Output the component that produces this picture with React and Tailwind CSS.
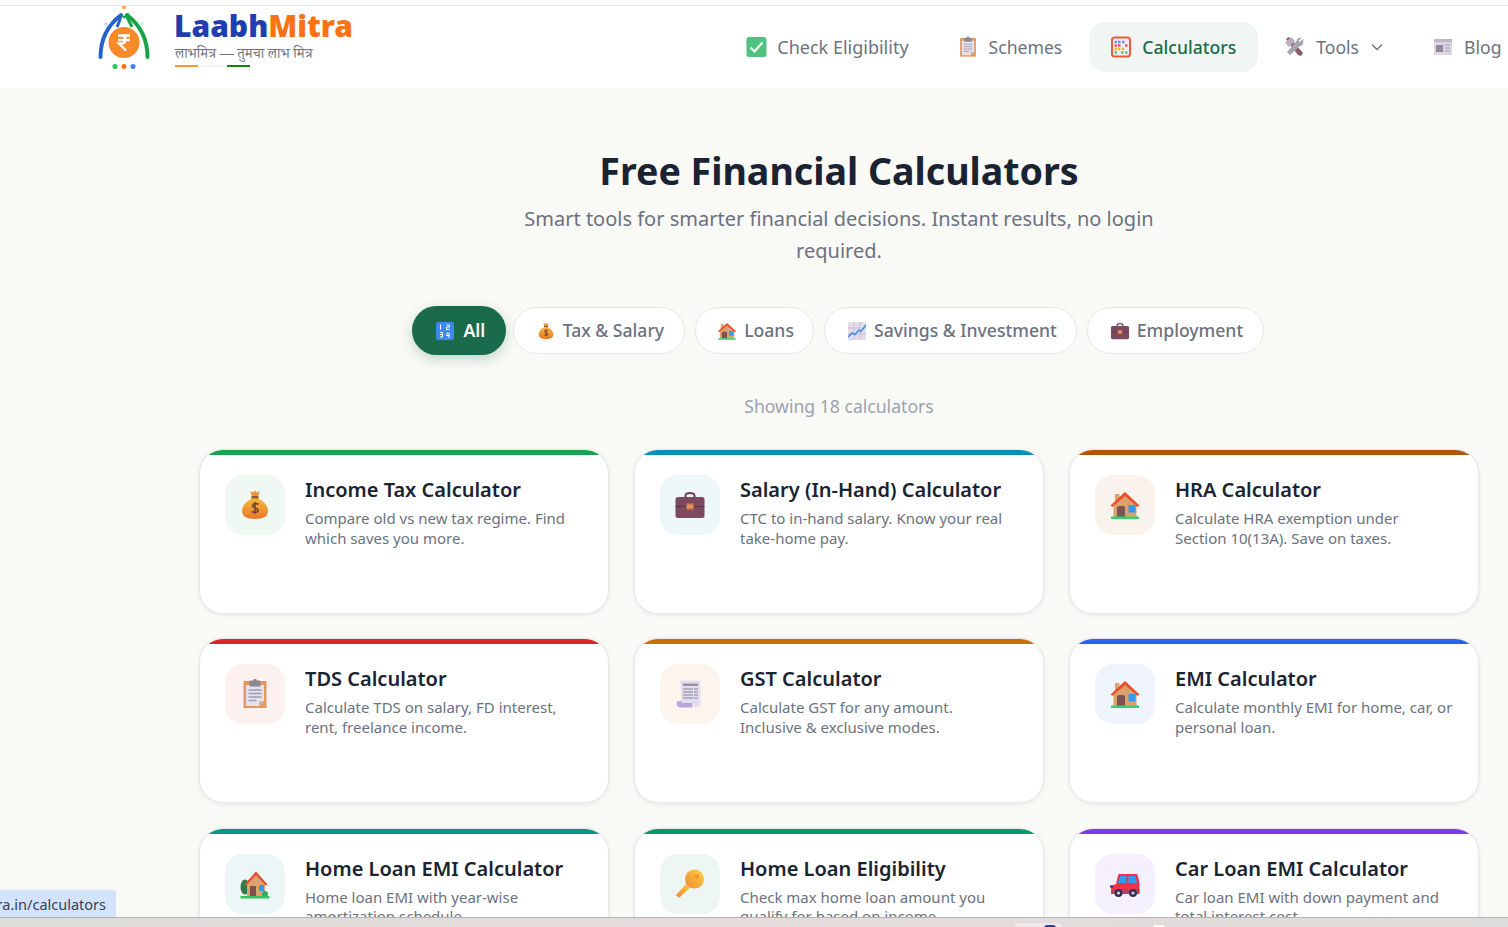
const font = { fontFamily: '"Noto Sans", "Noto Sans CJK SC", sans-serif' };

function MoneyBag({ size = 32 }) {
  return (
    <svg width={size} height={size} viewBox="0 0 32 32" aria-hidden="true">
      <defs>
        <linearGradient id="bagFill" x1="0" y1="0" x2="0" y2="1">
          <stop offset="0" stopColor="#f9b73e" />
          <stop offset="1" stopColor="#e8782a" />
        </linearGradient>
      </defs>
      <path d="M11 2l3 1.500 2-2 2 2 3-1.500-2 5.500h-6z" fill="#e9963a" />
      <rect x="12.500" y="7" width="7" height="3" fill="#8a5a35" />
      <path d="M13 9.500C7 12 3 17 3 22c0 5 4 8 13 8s13-3 13-8c0-5-4-10-10-12.500z" fill="url(#bagFill)" />
      <path d="M19.500 15.500c-1-1-5.500-1.500-5.800 1.200-.3 3 5.500 1.800 5.300 4.800-.2 2.600-5 2.300-6.300.8M16 13v12" fill="none" stroke="#7a4a35" strokeWidth="1.800" />
    </svg>
  );
}

function Briefcase({ size = 32 }) {
  return (
    <svg width={size} height={size} viewBox="0 0 32 32" aria-hidden="true">
      <path d="M11.500 9V6.500C11.500 4.800 13 4 16 4s4.500.8 4.500 2.500V9" fill="none" stroke="#6d3d4d" strokeWidth="2" />
      <rect x="1.500" y="8" width="29" height="21" rx="2.500" fill="#7c4a5e" />
      <path d="M1.500 17.500h29" stroke="#5b3044" strokeWidth="1" />
      <rect x="12.500" y="14.500" width="7" height="6" fill="#dc7f4e" />
      <rect x="12.500" y="17" width="7" height="1" fill="#f0a070" />
    </svg>
  );
}

function House({ size = 32 }) {
  return (
    <svg width={size} height={size} viewBox="0 0 32 32" aria-hidden="true">
      <rect x="6" y="5" width="4.500" height="12" fill="#d9a473" />
      <path d="M4.500 14L16 4l11.500 10v14h-23z" fill="#dda06c" />
      <path d="M1.500 16.500L16 3l14.500 13.500-1.800 1.500L16 7 3.300 18z" fill="#ea4e2c" />
      <path d="M8 28V18.500c0-1 1-1.500 4-1.500s4 .5 4 1.500V28z" fill="#7d5252" />
      <rect x="19.500" y="16" width="7" height="7.500" fill="#2f9cf0" />
      <rect x="2" y="27.500" width="28" height="2.500" fill="#34d06a" />
    </svg>
  );
}

function GardenHouse({ size = 32 }) {
  return (
    <svg width={size} height={size} viewBox="0 0 32 32" aria-hidden="true">
      <ellipse cx="6" cy="19" rx="4.500" ry="7.500" fill="#2f7d46" />
      <path d="M8 15L17 5l9 10v14H8z" fill="#dfa070" />
      <path d="M5.500 16.500L17 3.500l11.500 13-1.500 1.300L17 7 7 17.800z" fill="#e6492d" />
      <rect x="11" y="18" width="6" height="10" fill="#7d5252" />
      <rect x="20" y="17" width="5" height="6" fill="#2f9cf0" />
      <circle cx="26" cy="26" r="3" fill="#3aa85a" />
      <rect x="1.500" y="28" width="29" height="2.500" fill="#33c565" />
    </svg>
  );
}

function Clipboard({ size = 32 }) {
  return (
    <svg width={size} height={size} viewBox="0 0 32 32" aria-hidden="true">
      <rect x="4.500" y="3" width="23" height="27" fill="#e2995f" />
      <path d="M7 7h18v16l-5 5H7z" fill="#e6e1ee" />
      <path d="M25 23h-5v5z" fill="#c9b89f" />
      <rect x="10.500" y="2.500" width="11" height="6" rx="1" fill="#8d8794" />
      <circle cx="16" cy="2.500" r="1.800" fill="#8d8794" />
      <path d="M9.500 12h13M9.500 15.500h13M9.500 19h13M9.500 22.500h8" stroke="#a19cab" strokeWidth="1.300" />
    </svg>
  );
}

function Receipt({ size = 32 }) {
  return (
    <svg width={size} height={size} viewBox="0 0 32 32" aria-hidden="true">
      <path d="M2.500 25c0-1.500 1.500-2 3-2h13v6.500H7c-2.500 0-4.500-1.500-4.500-4.500z" fill="#b7a6dc" />
      <path d="M6.500 2l2 1.200L10.500 2l2 1.200 2-1.200 2 1.200 2-1.200 2 1.200 2-1.200 2 1.200 2-1.200v24c0 2.500-1.500 3.500-3.500 3.500s-3.500-1-3.500-3.500V25h-12z" fill="#e3deef" />
      <rect x="9" y="5.500" width="15" height="2.500" fill="#9791a3" />
      <path d="M9 11h15M9 14h15M9 17h15M9 20h15" stroke="#a8a3b3" strokeWidth="1.300" strokeDasharray="10 1 4 0" />
    </svg>
  );
}

function GoldKey({ size = 32 }) {
  return (
    <svg width={size} height={size} viewBox="0 0 32 32" aria-hidden="true">
      <defs>
        <linearGradient id="keyFill" x1="0" y1="1" x2="1" y2="0">
          <stop offset="0" stopColor="#f0883a" />
          <stop offset="1" stopColor="#fcd23e" />
        </linearGradient>
      </defs>
      <path d="M5 30l-3-3 12.500-13.500 4 4z" fill="url(#keyFill)" />
      <circle cx="20.500" cy="11" r="9.500" fill="url(#keyFill)" />
      <circle cx="23" cy="8.500" r="2.200" fill="#e9962f" />
    </svg>
  );
}

function RedCar({ size = 32 }) {
  return (
    <svg width={size} height={size} viewBox="0 0 32 32" aria-hidden="true">
      <path d="M9 7.500c0-.8.700-1.500 1.500-1.500H27c1 0 1.500.6 1.800 1.500L30.500 15v10H2v-7l5-2z" fill="#f0324a" />
      <path d="M11 8h6.500v7h-8.800zM19.500 8h7l1.500 7h-8.500z" fill="#2f9cf0" />
      <path d="M2 21h28.500v5H2z" fill="#b3445e" />
      <rect x="1" y="17.500" width="3" height="2" fill="#3b2a4a" />
      <circle cx="9.500" cy="25" r="4" fill="#3d2c4e" />
      <circle cx="9.500" cy="25" r="1.600" fill="#d8d3e3" />
      <circle cx="24" cy="25" r="4" fill="#3d2c4e" />
      <circle cx="24" cy="25" r="1.600" fill="#d8d3e3" />
    </svg>
  );
}

function CheckBox({ size = 22 }) {
  return (
    <svg width={size} height={size} viewBox="0 0 22 22" aria-hidden="true">
      <rect x="1.500" y="1" width="20" height="20" rx="2.500" fill="#4fc27f" />
      <path d="M5.500 11.500l4 4 8-9" fill="none" stroke="#fff" strokeWidth="2.200" />
    </svg>
  );
}

function Abacus({ size = 22 }) {
  return (
    <svg width={size} height={size} viewBox="0 0 22 22" aria-hidden="true">
      <rect x="2" y="1.500" width="18" height="19" rx="2.500" fill="#f4eff3" stroke="#ea5a3c" strokeWidth="2" />
      <path d="M4.500 6h2.500M8 6h2.500M12 6h2.500" stroke="#6f8bea" strokeWidth="2.400" />
      <path d="M4.500 9.500h2.500M8 9.500h2.500M15 9.500h2.500" stroke="#ea4f74" strokeWidth="2.400" />
      <path d="M4.500 13h2.500M8 13h2.500M12 13h2.500" stroke="#f0b23c" strokeWidth="2.400" />
      <path d="M4.500 16.500h2.500M11 16.500h2.500M15 16.500h2.500" stroke="#52c078" strokeWidth="2.400" />
    </svg>
  );
}

function ToolsIcon({ size = 22 }) {
  return (
    <svg width={size} height={size} viewBox="0 0 22 22" aria-hidden="true">
      <path d="M2 3l3-2 14 16-2 3-3-1z" fill="#8c5a68" />
      <path d="M1 7l6-6 4 4-6 6z" fill="#b6b0c0" />
      <path d="M19 2.500l-2.500 3-2-.5 3-3c-2.500-1-5 .5-5 3L3 16l3 3 10-9c2.500 0 4-2.500 3-7.500z" fill="#a9a4b3" />
    </svg>
  );
}

function Newspaper({ size = 22 }) {
  return (
    <svg width={size} height={size} viewBox="0 0 22 22" aria-hidden="true">
      <rect x="2" y="3" width="18" height="16" fill="#dcd6e6" />
      <rect x="2" y="3" width="18" height="3" fill="#bdb6c8" />
      <rect x="4" y="9" width="7" height="7" fill="#8e8899" />
      <path d="M13 9h5M13 12h5M13 15h5" stroke="#a39daf" strokeWidth="1.200" />
    </svg>
  );
}

function Numbers({ size = 18 }) {
  return (
    <svg width={size} height={size} viewBox="0 0 18 18" aria-hidden="true">
      <rect width="18" height="18" rx="2" fill="#3b88ef" />
      <path d="M4.500 2.500v5M10.500 3h3v2h-3v2.500h3M4 10.500h2.500v2H4.500h2v2.500H4M11.500 10.500l-1 3h3.500M13 10.500V16" fill="none" stroke="#fff" strokeWidth="1" />
    </svg>
  );
}

function ChartUp({ size = 18 }) {
  return (
    <svg width={size} height={size} viewBox="0 0 18 18" aria-hidden="true">
      <rect width="18" height="18" fill="#e3dcec" />
      <path d="M6 0v18M12 0v18M0 6h18M0 12h18" stroke="#cbc1d8" strokeWidth="1" />
      <path d="M0 15l4-4 3 1.500L11 8l2 1.500L18 3" fill="none" stroke="#3b8fe0" strokeWidth="1.500" />
    </svg>
  );
}

function Logo() {
  return (
    <svg width="58" height="70" viewBox="0 0 58 70" aria-hidden="true">
      <circle cx="27" cy="1" r="2.200" fill="#fb923c" opacity="0.8" />
      <circle cx="9" cy="18" r="1.800" fill="#bfdbfe" />
      <circle cx="45" cy="18" r="1.800" fill="#bbf7d0" />
      <path d="M3.500 51C3.500 33 11 19 24 9" fill="none" stroke="#2563c8" strokeWidth="4" strokeLinecap="round" />
      <path d="M24 9c-1 5-2 8-4 12" fill="none" stroke="#2563c8" strokeWidth="3" />
      <path d="M50.500 51C50.500 33 43 19 30 9" fill="none" stroke="#16a34a" strokeWidth="4" strokeLinecap="round" />
      <path d="M29 9c2 4 4 8 6 12" fill="none" stroke="#16a34a" strokeWidth="3" />
      <path d="M22 6l5 4 6-4-6 7z" fill="#16a34a" />
      <circle cx="27" cy="36.500" r="15.500" fill="#f98a2a" />
      <path d="M21 29.500h12M21 34h12M22 29.500h3c4.500 0 4.500 8 0 8h-3l7 7" fill="none" stroke="#fff" strokeWidth="2.300" />
      <circle cx="18" cy="60.500" r="2.500" fill="#22c55e" />
      <circle cx="27" cy="60.500" r="2.500" fill="#f97316" />
      <circle cx="36" cy="60.500" r="2.500" fill="#3b82f6" />
    </svg>
  );
}

const navItems = [
  { label: 'Check Eligibility', icon: CheckBox, textClass: 'text-[18px]' },
  { label: 'Schemes', icon: Clipboard },
  { label: 'Calculators', icon: Abacus, active: true },
  { label: 'Tools', icon: ToolsIcon, chevron: true },
  { label: 'Blog', icon: Newspaper },
];

const filters = [
  { label: 'All', icon: Numbers, iconSize: 18, active: true },
  { label: 'Tax & Salary', icon: MoneyBag, iconSize: 18 },
  { label: 'Loans', icon: House, iconSize: 20 },
  { label: 'Savings & Investment', icon: ChartUp, iconSize: 18 },
  { label: 'Employment', icon: Briefcase, iconSize: 20 },
];

const cards = [
  { title: 'Income Tax Calculator', desc: 'Compare old vs new tax regime. Find which saves you more.', icon: MoneyBag, bar: 'bg-[#16a34a]', tint: 'bg-[#f0f8f3]' },
  { title: 'Salary (In-Hand) Calculator', desc: 'CTC to in-hand salary. Know your real take-home pay.', icon: Briefcase, bar: 'bg-[#0891b2]', tint: 'bg-[#edf6f9]' },
  { title: 'HRA Calculator', desc: 'Calculate HRA exemption under Section 10(13A). Save on taxes.', icon: House, bar: 'bg-[#b45309]', tint: 'bg-[#faf3ed]' },
  { title: 'TDS Calculator', desc: 'Calculate TDS on salary, FD interest, rent, freelance income.', icon: Clipboard, bar: 'bg-[#dc2626]', tint: 'bg-[#fdf1f0]' },
  { title: 'GST Calculator', desc: 'Calculate GST for any amount. Inclusive & exclusive modes.', icon: Receipt, bar: 'bg-[#c97106]', tint: 'bg-[#fcf5ed]' },
  { title: 'EMI Calculator', desc: 'Calculate monthly EMI for home, car, or personal loan.', icon: House, bar: 'bg-[#2563eb]', tint: 'bg-[#eff4fd]' },
  { title: 'Home Loan EMI Calculator', desc: 'Home loan EMI with year-wise amortization schedule.', icon: GardenHouse, bar: 'bg-[#0d9488]', tint: 'bg-[#edf6f6]' },
  { title: 'Home Loan Eligibility', desc: 'Check max home loan amount you qualify for based on income.', icon: GoldKey, bar: 'bg-[#059669]', tint: 'bg-[#edf6f2]' },
  { title: 'Car Loan EMI Calculator', desc: 'Car loan EMI with down payment and total interest cost.', icon: RedCar, bar: 'bg-[#7c3aed]', tint: 'bg-[#f4f0fd]' },
];

function NavLink({ label, icon: Icon, active, chevron, textClass }) {
  return (
    <a className={`flex h-[50px] shrink-0 items-center gap-[10px] rounded-[16px] px-[21.500px] text-[17.600px] ${active ? 'bg-[#f1f6f4] font-medium text-[#1a6b4b]' : 'text-[#6b7280]'}`}>
      <Icon size={22} />
      <span className={textClass}>{label}</span>
      {chevron && (
        <svg width="14" height="14" viewBox="0 0 14 14" className="ml-[1px]" aria-hidden="true">
          <path d="M2 4.500l5 5 5-5" fill="none" stroke="#6b7280" strokeWidth="1.400" />
        </svg>
      )}
    </a>
  );
}

function FilterChip({ label, icon: Icon, iconSize, active }) {
  if (active) {
    return (
      <button className="mr-[-3px] flex h-[49px] items-center gap-[9px] rounded-full bg-[#1a6b4b] pl-[24px] pr-[21px] text-[17.600px] font-semibold text-white shadow-[0_4px_12px_rgba(26,107,75,0.25)]">
        <Icon size={iconSize} />
        {label}
      </button>
    );
  }
  return (
    <button className="flex h-[47px] items-center gap-[8px] rounded-full border border-[#e5e7eb] bg-white pl-[22.500px] pr-[19.500px] text-[17.600px] font-medium text-[#6b7280]">
      <span className="flex w-[18px] justify-center">
        <span className="shrink-0">
          <Icon size={iconSize} />
        </span>
      </span>
      {label}
    </button>
  );
}

function CalculatorCard({ title, desc, icon: Icon, bar, tint }) {
  return (
    <div className="relative h-[164.800px] overflow-hidden rounded-[24px] border border-[#e8e8ea] bg-white shadow-[0_1px_4px_rgba(0,0,0,0.08)]">
      <div className={`h-[5px] ${bar}`} />
      <div className="flex gap-[20px] pl-[25px] pr-[25.500px] pt-[20px]">
        <div className={`flex h-[60px] w-[60px] shrink-0 items-center justify-center rounded-[18px] ${tint}`}>
          <Icon size={32} />
        </div>
        <div className="min-w-0 flex-1">
          <h3 className="text-[20px] font-semibold leading-[30px] text-[#1a2332]">{title}</h3>
          <p className="mt-[4px] text-[15px] leading-[19.500px] text-[#6b7280]">{desc}</p>
        </div>
      </div>
    </div>
  );
}

export default function App() {
  return (
    <div className="relative flex h-[927px] w-full flex-col overflow-hidden bg-[#f9f9f6]" style={font}>
      <header className="h-[88px] shrink-0 overflow-hidden bg-white">
        <div className="h-[5px] bg-white" />
        <div className="h-px bg-[#e5e5e5]" />
        <div className="flex h-[82px] items-start justify-between">
          <div className="ml-[97px] flex">
            <Logo />
            <div className="ml-[20px]">
              <div className="ml-[-1px] text-[30px] font-black leading-[40px]">
                <span className="text-[#1e40af]">Laabh</span>
                <span className="text-[#f97316]">Mitra</span>
              </div>
              <div className="mt-[2px] text-[14px] leading-[16px] text-[#6b7280]" style={{ fontFamily: '"Noto Serif Devanagari", "Noto Sans Devanagari", "Noto Sans", sans-serif' }}>
                लाभमित्र — तुमचा लाभ मित्र
              </div>
              <div className="mt-[1px] flex gap-[3px]">
                <div className="h-[2px] w-[23px] bg-[#ff9933]" />
                <div className="h-[2px] w-[23px] bg-[#f3f3f3]" />
                <div className="h-[2px] w-[23px] bg-[#138808]" />
              </div>
            </div>
          </div>
          <nav className="mr-[-15px] mt-[16px] flex items-center gap-[5px]">
            {navItems.map((item) => (
              <NavLink key={item.label} {...item} />
            ))}
          </nav>
        </div>
      </header>

      <main className="min-h-0 flex-1 overflow-hidden pl-[199px]">
        <div className="w-[1280px]">
          <section className="pt-[56px] text-center">
            <h1 className="text-[37.600px] font-bold leading-[54px] text-[#1a2332]">Free Financial Calculators</h1>
            <p className="mx-auto mt-[5px] w-[660px] text-[20px] leading-[32px] text-[#6b7280]">
              Smart tools for smarter financial decisions. Instant results, no login required.
            </p>
          </section>
          <div className="mt-[39px] flex items-center justify-center gap-[10px] pr-[2px]">
            {filters.map((f) => (
              <FilterChip key={f.label} {...f} />
            ))}
          </div>
          <p className="mt-[37px] text-center text-[17.600px] leading-[28px] text-[#9ca3af]">Showing 18 calculators</p>
          <div className="mt-[29px] grid grid-cols-3 gap-x-[25px] gap-y-[24.600px]">
            {cards.map((c) => (
              <CalculatorCard key={c.title} {...c} />
            ))}
          </div>
        </div>
      </main>

      <div className="absolute bottom-[10px] left-0 flex h-[27px] w-[116px] items-center justify-end rounded-tr-[3px] bg-[#d3e3fd] pr-[10px] pt-[2px] text-[14.500px] text-[#374151]">
        ra.in/calculators
      </div>

      <footer className="relative h-[10px] shrink-0 overflow-hidden border-t border-[#b4b4b4] bg-gradient-to-r from-[#dcdcd8] via-[#e6dcdc] to-[#dcdcda]">
        <div className="absolute left-[1015px] top-[5px] h-[5px] w-[47px] rounded-t-[4px] bg-[#efe9ea]">
          <div className="ml-[29px] mt-[2px] h-[3px] w-[12px] rounded-t-full bg-[#34408c]" />
        </div>
        <div className="absolute left-[1153px] top-[7px] h-[3px] w-[12px] rounded-t-full bg-white" />
      </footer>
    </div>
  );
}
